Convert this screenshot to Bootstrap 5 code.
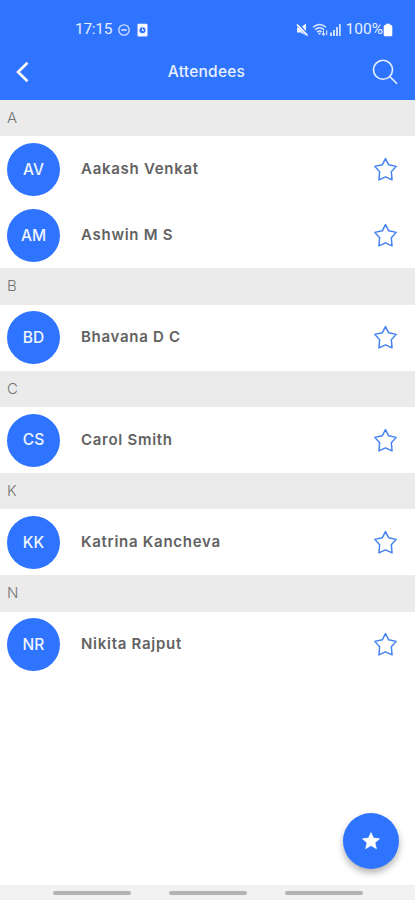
<!DOCTYPE html>
<html lang="en">
<head>
<meta charset="utf-8">
<meta name="viewport" content="width=device-width, initial-scale=1">
<title>Attendees</title>
<link href="https://cdn.jsdelivr.net/npm/bootstrap@5.3.0/dist/css/bootstrap.min.css" rel="stylesheet">
<style>
:root { --brand: #2f74ff; }
body { font-family: Inter, "Liberation Sans", Arial, sans-serif; height: 900px; overflow: hidden; background: #fff; }
svg { display: block; flex: none; }
.top-area { background: var(--brand); height: 100px; color: #fff; }
.status-line { height: 44px; padding: 15px 22px 0 75px; font: 15.5px/29px Roboto, sans-serif; color: #e6efff; }
.status-clock { letter-spacing: -.3px; width: 38px; }
.title-line { height: 56px; padding: 0 17px 0 15px; }
.page-title { font-size: 15.5px; font-weight: 500; line-height: 20px; letter-spacing: .25px; margin-left: 11px; color: #e9f0ff; }
.group-head { height: 36.35px; background: #ebebeb; color: #757575; font-size: 15px; font-weight: 300; padding: 0 7px; }
.person { height: 66px; padding: 0 17px 0 7px; }
.initials { width: 53px; height: 53px; background: var(--brand); color: #f0f5ff; font-size: 15.5px; font-weight: 500; }
.person-name { margin-left: 21px; font-size: 15px; font-weight: 600; letter-spacing: .72px; color: #626262; }
.fab { position: absolute; left: 343px; top: 813px; width: 56px; height: 56px; background: var(--brand); box-shadow: 0 4px 7px rgba(0,0,0,.3); }
.nav-strip { height: 15px; background: #f1f1f1; gap: 38px; padding: 6px 0 0 53px; }
.nav-strip span { width: 78px; height: 4px; background: #b3b3b3; }
</style>
</head>
<body class="d-flex flex-column position-relative">
<svg width="0" height="0" class="position-absolute">
  <symbol id="star-line" viewBox="0 0 24 24"><path d="M12 1.500 15.100 7.500 22.300 9 17.600 14.200 18.300 22 12 19.100 5.700 22 6.400 14.200 1.700 9 8.900 7.500Z" fill="none" stroke="#4281f3" stroke-width="1.400" stroke-linejoin="round"/></symbol>
</svg>
<header class="top-area flex-shrink-0">
  <div class="status-line d-flex align-items-center">
    <span class="status-clock">17:15</span>
    <svg class="ms-1" width="14" height="14" viewBox="0 0 14 14" fill="none" stroke="#d3e1ff" stroke-width="1.3"><circle cx="7" cy="7" r="5.2"/><path d="M4.300 7h5.400" stroke-width="1.7"/></svg>
    <svg width="11" height="14" viewBox="0 0 11 14" style="margin-left:6px"><rect x=".5" y=".7" width="10" height="12.8" rx="1" fill="#f5f8ff"/><circle cx="5.5" cy="7.2" r="3" fill="#2f74ff"/><path d="M5.500 5.500v2h1.500" stroke="#fff" fill="none"/></svg>
    <div class="d-flex align-items-center ms-auto">
      <svg width="13" height="14" viewBox="0 0 13 14"><path d="M1 4.500h3.500L10 .500v12L4.500 9.500H1Z" fill="#eef4ff"/><path d="M2 1l10 12" stroke="#2f74ff" stroke-width="3"/><path d="M1 1.500 11.500 12.500" stroke="#fff" stroke-width="1.800"/></svg>
      <svg width="17" height="14" viewBox="0 0 17 14" style="margin-left:3px" fill="none" stroke="#d9e6ff" stroke-width="1.5"><path d="M1 4.300Q7.500-1.200 14 4.300M3 6.600Q7.500 3 12 6.600M5 9Q7.500 7 10 9"/><path d="M7.500 12 5.800 9.700h3.400Z" fill="#d9e6ff" stroke="none"/><path d="M11.500 7.500v4.700m-1.600-1.600 1.600 1.700 1.500-1.700M14.700 12V7.300" stroke-width="1.1"/></svg>
      <svg width="13" height="13" viewBox="0 0 13 13" fill="#c9dbff"><path d="M1 9.500h2V13H1zM4 7h2v6H4zM7 4h2v9H7zM10 1h1.800v12H10z"/></svg>
      <span style="margin-left:4px">100%</span>
      <svg width="10" height="14" viewBox="0 0 10 14"><path d="M3.200 1h3.600v1.300H8q1 0 1 1V12q0 1-1 1H2q-1 0-1-1V3.300q0-1 1-1h1.200Z" fill="#fff" stroke="#fff" stroke-width=".6"/></svg>
    </div>
  </div>
  <div class="title-line d-flex align-items-center justify-content-between">
    <svg width="15" height="22" viewBox="0 0 15 22"><path d="M12.500 1.800 3 11l9.500 9.200" fill="none" stroke="#fff" stroke-width="2.600"/></svg>
    <div class="page-title">Attendees</div>
    <svg width="26" height="26" viewBox="0 0 26 26" fill="none" stroke="#eaf1ff" stroke-width="1.600"><circle cx="11" cy="10.800" r="9.500"/><path d="m17.700 17.500 7.300 7.300"/></svg>
  </div>
</header>
<main class="flex-grow-1">
  <div class="group-head d-flex align-items-center">A</div>
  <div class="person d-flex align-items-center"><div class="initials rounded-circle d-flex align-items-center justify-content-center">AV</div><div class="person-name">Aakash Venkat</div><svg class="ms-auto" width="25" height="25"><use href="#star-line"/></svg></div>
  <div class="person d-flex align-items-center"><div class="initials rounded-circle d-flex align-items-center justify-content-center">AM</div><div class="person-name">Ashwin M S</div><svg class="ms-auto" width="25" height="25"><use href="#star-line"/></svg></div>
  <div class="group-head d-flex align-items-center">B</div>
  <div class="person d-flex align-items-center"><div class="initials rounded-circle d-flex align-items-center justify-content-center">BD</div><div class="person-name">Bhavana D C</div><svg class="ms-auto" width="25" height="25"><use href="#star-line"/></svg></div>
  <div class="group-head d-flex align-items-center">C</div>
  <div class="person d-flex align-items-center"><div class="initials rounded-circle d-flex align-items-center justify-content-center">CS</div><div class="person-name">Carol Smith</div><svg class="ms-auto" width="25" height="25"><use href="#star-line"/></svg></div>
  <div class="group-head d-flex align-items-center">K</div>
  <div class="person d-flex align-items-center"><div class="initials rounded-circle d-flex align-items-center justify-content-center">KK</div><div class="person-name">Katrina Kancheva</div><svg class="ms-auto" width="25" height="25"><use href="#star-line"/></svg></div>
  <div class="group-head d-flex align-items-center">N</div>
  <div class="person d-flex align-items-center"><div class="initials rounded-circle d-flex align-items-center justify-content-center">NR</div><div class="person-name">Nikita Rajput</div><svg class="ms-auto" width="25" height="25"><use href="#star-line"/></svg></div>
</main>
<button class="fab btn border-0 p-0 rounded-circle d-flex align-items-center justify-content-center" aria-label="Favourites">
  <svg width="20" height="20" viewBox="0 0 20 20"><path d="m10 1.600 2.500 5.500 6.100.6-4.600 4 1.400 6L10 14.600l-5.400 3.100 1.400-6-4.600-4 6.100-.6Z" fill="#fff" stroke="#fff" stroke-width=".6" stroke-linejoin="round"/></svg>
</button>
<footer class="nav-strip d-flex flex-shrink-0"><span class="rounded-pill"></span><span class="rounded-pill"></span><span class="rounded-pill"></span></footer>
<script src="https://cdn.jsdelivr.net/npm/bootstrap@5.3.0/dist/js/bootstrap.bundle.min.js"></script>
</body>
</html>
